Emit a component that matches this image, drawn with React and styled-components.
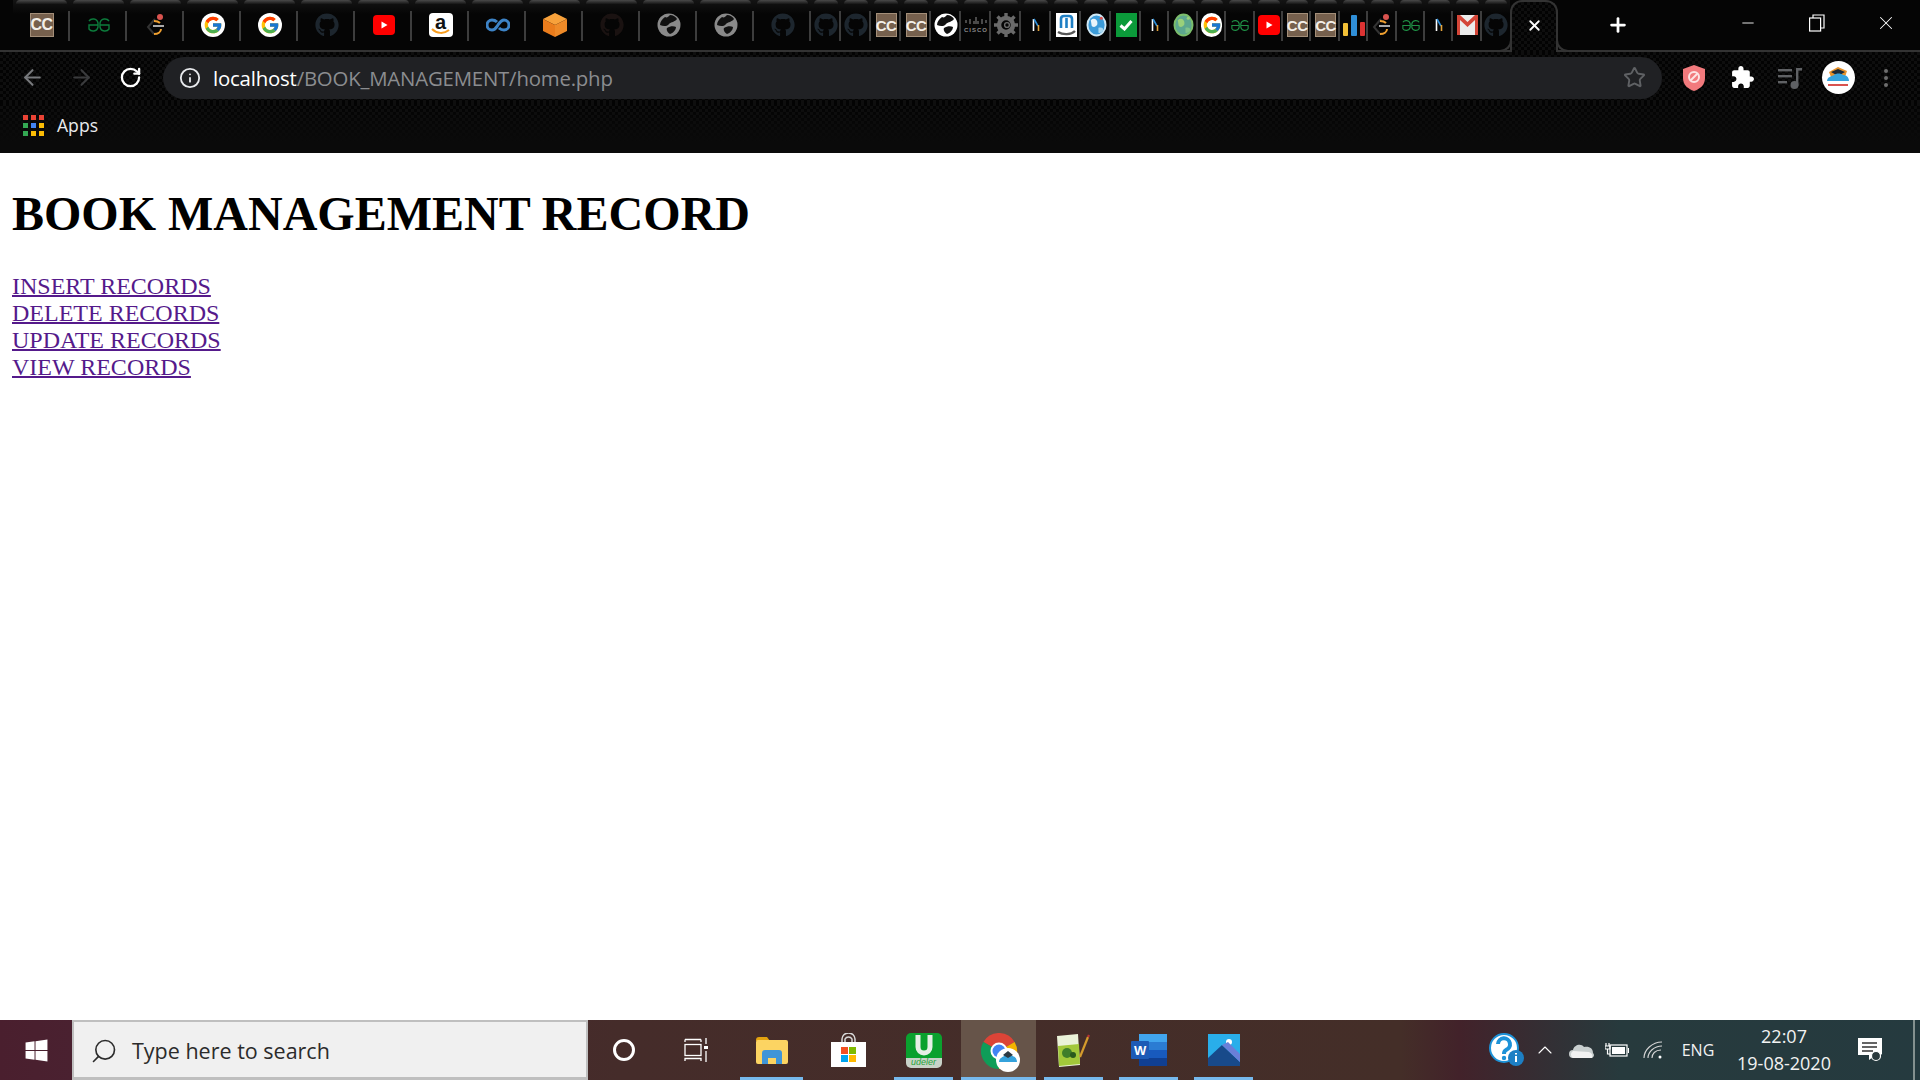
import React from 'react';
import styled, { createGlobalStyle } from 'styled-components';
import { ArrowLeft, ArrowRight, RotateCw, Star, Plus, X, Info, Minus, Search, ChevronUp } from 'lucide-react';
import { FaGithub, FaWindows } from 'react-icons/fa';
import { FcGoogle } from 'react-icons/fc';

const GlobalStyle = createGlobalStyle`
  html, body { margin: 0; padding: 0; background: #fff; }
  * { box-sizing: border-box; }
`;

const carbon = `repeating-conic-gradient(#0e0e0e 0 25%, #030303 0 50%) 0 0 / 6px 6px`;

const Screen = styled.div`
  width: 1920px;
  height: 1080px;
  display: flex;
  flex-direction: column;
  overflow: hidden;
`;

/* ---------- tab strip ---------- */
const TabStrip = styled.div`
  height: 52px;
  display: flex;
  padding-left: 13px;
  background: #050505;
  border-bottom: 2px solid #333;
  flex-shrink: 0;
`;

const Tab = styled.div`
  position: relative;
  width: ${(p) => p.$w}px;
  height: 50px;
  display: flex;
  align-items: center;
  justify-content: center;
  background: linear-gradient(#141414, #050505 14px);
  flex-shrink: 0;
  &::before {
    content: '';
    position: absolute;
    top: 0;
    left: 3px;
    right: 3px;
    height: 4px;
    border-radius: 6px 6px 0 0;
    background: linear-gradient(#4a4a4a, #161616);
  }
  &::after {
    content: '';
    position: absolute;
    top: 11px;
    right: 0;
    width: 2px;
    height: 30px;
    background: ${(p) => (p.$last ? 'transparent' : '#3d3d3d')};
  }
`;

const ActiveTab = styled.div`
  position: relative;
  width: 48px;
  height: 52px;
  display: flex;
  align-items: center;
  justify-content: center;
  padding-bottom: 3px;
  color: #fff;
  background: ${carbon};
  border: 2px solid #333;
  border-bottom: none;
  border-radius: 12px 12px 0 0;
  flex-shrink: 0;
  &::before,
  &::after {
    content: '';
    position: absolute;
    bottom: 0;
    width: 12px;
    height: 12px;
    background: #050505;
    border-bottom: 2px solid #333;
  }
  &::before {
    left: -14px;
    border-right: 2px solid #333;
    border-bottom-right-radius: 12px;
  }
  &::after {
    right: -14px;
    border-left: 2px solid #333;
    border-bottom-left-radius: 12px;
  }
`;

const NewTab = styled.div`
  width: 120px;
  height: 50px;
  display: flex;
  align-items: center;
  justify-content: center;
  color: #fff;
  flex-shrink: 0;
`;

const WindowControls = styled.div`
  margin-left: auto;
  display: flex;
  color: #fff;
`;

const WindowBtn = styled.div`
  width: 69px;
  height: 50px;
  display: flex;
  align-items: center;
  justify-content: center;
  padding-bottom: 4px;
`;

const RestoreIcon = () => (
  <svg width="16" height="18" viewBox="0 0 16 18" fill="none" stroke="#fff" strokeWidth="1.2">
    <rect x="0.6" y="4" width="11" height="13" />
    <path d="M4 4V1h11v13h-3" />
  </svg>
);

/* ---------- favicons ---------- */
const Fav = styled.div`
  position: relative;
  width: ${(p) => p.$w || 24}px;
  height: 24px;
  display: flex;
  align-items: center;
  justify-content: center;
  flex-shrink: 0;
  border-radius: ${(p) => p.$radius || 0}px;
  background: ${(p) => p.$bg || 'transparent'};
`;

const CcBox = styled(Fav)`
  background: #76604d;
  border: 1px solid #a38e78;
  color: #f3efe9;
  font: 700 ${(p) => (p.$w < 24 ? 15 : 16)}px/1 'Liberation Sans', sans-serif;
  letter-spacing: -0.5px;
`;

const AmazonTile = styled(Fav)`
  align-items: flex-start;
`;

const AmazonLetter = styled.span`
  font: 700 20px/18px 'Liberation Sans', sans-serif;
  color: #111;
`;

const AmazonSmile = styled.svg`
  position: absolute;
  left: 2px;
  bottom: 1px;
`;

const CiscoWord = styled.span`
  font: 700 6px/1 'Liberation Sans', sans-serif;
  letter-spacing: 1px;
  color: #8a8a8a;
`;

const CiscoBox = styled.div`
  display: flex;
  flex-direction: column;
  align-items: center;
  gap: 2px;
`;

const Gfg = ({ narrow }) => (
  <svg width={narrow ? 20 : 24} height={narrow ? 13 : 16} viewBox="0 0 24 16" fill="none" stroke={narrow ? '#1f8f45' : '#0c7c3c'} strokeWidth="1.4">
    <path d="M2 4C4 1 10 1 11 6v4C10 15 4 15 2 12V8h9" />
    <path d="M22 4C20 1 14 1 13 6v4c1 5 7 5 9 2V8h-9" />
  </svg>
);

const Ninja = () => (
  <svg width="24" height="24" viewBox="0 0 24 24" fill="none">
    <path d="M11 6 4 14l6 7" stroke="#333" strokeWidth="2" />
    <circle cx="16" cy="4" r="3" fill="#d9534f" />
    <path d="M10 8c3 0 4 0 6 2" stroke="#f0a030" strokeWidth="2" />
    <path d="M9 13h11" stroke="#aaa" strokeWidth="2" />
    <path d="M17 16c0 3-3 5-7 5" stroke="#f0a030" strokeWidth="2" />
  </svg>
);

const Youtube = () => (
  <svg width="22" height="20" viewBox="0 0 22 20">
    <rect width="22" height="20" rx="4" fill="#f00" />
    <path d="M8.5 6.5v7l6-3.5z" fill="#fff" />
  </svg>
);

const AmazonIcon = () => (
  <AmazonTile $bg="#fff" $radius={4}>
    <AmazonLetter>a</AmazonLetter>
    <AmazonSmile width="20" height="8" viewBox="0 0 20 8" fill="none">
      <path d="M1 1c5 5 12 5 17 1" stroke="#f79c1d" strokeWidth="2" />
    </AmazonSmile>
  </AmazonTile>
);

const Loop = () => (
  <svg width="24" height="14" viewBox="0 0 24 14" fill="none" stroke="#3d83c6" strokeWidth="3">
    <path d="M11 4C9 2 7 2 6 2a5 5 0 0 0 0 10c3 0 4-2 6-5s3-5 6-5a5 5 0 0 1 0 10c-1 0-3 0-5-2" />
  </svg>
);

const Cube = () => (
  <svg width="24" height="24" viewBox="0 0 24 24">
    <path d="M12 0 24 6 12 12 0 6z" fill="#f7a13b" />
    <path d="M0 6l12 6v12L0 18z" fill="#ea7c1c" />
    <path d="M24 6 12 12v12l12-6z" fill="#ee8a28" />
  </svg>
);

const Globe = ({ color, size = 24 }) => (
  <svg width={size} height={size} viewBox="0 0 24 24">
    <circle cx="12" cy="12" r="11.5" fill={color} />
    <path d="M13 2c3 0 6 2 7 4-2 3-6 3-8 5-1 2-5 3-9 1 0-3 2-6 5-8 2 1 3 0 5-2z" fill="#111" />
    <path d="M10 15c3-2 7-2 9-1 0 3-3 6-6 7-2-1-4-4-3-6z" fill="#111" />
  </svg>
);

const Cisco = () => (
  <CiscoBox>
    <svg width="22" height="8" viewBox="0 0 22 8" stroke="#777" strokeWidth="1.2">
      <path d="M1 3v3M5 2v5M9 4v3M13 4v3M17 2v5M21 3v3M11 0v7" />
    </svg>
    <CiscoWord>CISCO</CiscoWord>
  </CiscoBox>
);

const Gear = () => (
  <svg width="24" height="24" viewBox="0 0 24 24">
    <circle cx="12" cy="12" r="7" fill="none" stroke="#6a6a6a" strokeWidth="4.5" />
    <path d="M12 0v5M12 19v5M0 12h5M19 12h5M3.5 3.5l3.5 3.5M17 17l3.5 3.5M20.5 3.5 17 7M7 17l-3.5 3.5" stroke="#6a6a6a" strokeWidth="3.4" />
    <circle cx="13" cy="12" r="2.4" fill="none" stroke="#6a6a6a" strokeWidth="1.4" />
  </svg>
);

const Sliver = () => (
  <svg width="8" height="14" viewBox="0 0 8 14" fill="none" strokeWidth="1.6">
    <path d="M1.5 1v12" stroke="#fff" />
    <path d="M2 1l4 7" stroke="#2f8fd8" />
    <path d="M6.5 7v6" stroke="#e2a23b" />
  </svg>
);

const WTile = () => (
  <Fav $w={21} $bg="#fff">
    <svg width="21" height="24" viewBox="0 0 21 24" fill="none">
      <path d="M5 15V6q0-3 3-3h5q3 0 3 3v9M10.5 5v10" stroke="#1f7fc4" strokeWidth="2.6" />
      <path d="M2 19c5 3 13 3 17-1" stroke="#555" strokeWidth="2.4" />
    </svg>
  </Fav>
);

const ShinyGlobe = ({ green }) => (
  <svg width="21" height="24" viewBox="0 0 22 24">
    <ellipse cx="11" cy="12" rx="10.5" ry="12" fill={green ? '#7cbe6b' : '#cfe8f5'} />
    <ellipse cx="11" cy="12" rx="8.5" ry="10" fill={green ? '#5da78f' : '#3b9bd9'} />
    <path d="M5 7c3-3 7-1 7 3s-4 5-6 3z" fill={green ? '#9ad07a' : '#e8f4fa'} />
    <path d="M13 15c3-1 5 0 5 2s-3 4-5 3z" fill={green ? '#7fc28a' : '#a8d8f0'} />
    <circle cx="16" cy="5" r="1.6" fill={green ? '#9ad07a' : '#d9534f'} />
  </svg>
);

const CheckTile = () => (
  <Fav $w={21} $bg="#0b9a3a">
    <svg width="14" height="12" viewBox="0 0 14 12" fill="none">
      <path d="M1.5 6.5 5.5 10l7-8" stroke="#fff" strokeWidth="3" />
    </svg>
  </Fav>
);

const Bars = () => (
  <svg width="22" height="24" viewBox="0 0 22 24">
    <rect x="0" y="10" width="5" height="13" rx="1" fill="#f2c037" />
    <rect x="8" y="2" width="6" height="21" rx="1" fill="#2f8fd8" />
    <rect x="17" y="9" width="5" height="14" rx="1" fill="#d33" />
  </svg>
);

const Gmail = () => (
  <svg width="21" height="20" viewBox="0 0 21 20">
    <rect width="21" height="20" fill="#ececec" />
    <path d="M0 0h3l7.5 7L18 0h3v20h-3V5l-7.5 7L3 5v15H0z" fill="#d44638" />
  </svg>
);

const Favicon = ({ kind, narrow }) => {
  const w = narrow ? 21 : 24;
  switch (kind) {
    case 'cc':
      return <CcBox $w={w}>CC</CcBox>;
    case 'gfg':
      return <Gfg narrow={narrow} />;
    case 'ninja':
      return <Ninja />;
    case 'google':
      return (
        <Fav $w={w} $bg="#fff" $radius={12}>
          <FcGoogle size={20} />
        </Fav>
      );
    case 'github':
      return <FaGithub size={24} color="#1d262e" />;
    case 'githubDim':
      return <FaGithub size={24} color="#1a1211" />;
    case 'yt':
      return <Youtube />;
    case 'amazon':
      return <AmazonIcon />;
    case 'loop':
      return <Loop />;
    case 'cube':
      return <Cube />;
    case 'globe':
      return <Globe color="#8a8a8a" />;
    case 'globeWhite':
      return <Globe color="#fff" />;
    case 'cisco':
      return <Cisco />;
    case 'gear':
      return <Gear />;
    case 'sliver':
      return <Sliver />;
    case 'w':
      return <WTile />;
    case 'earth':
      return <ShinyGlobe />;
    case 'earthGreen':
      return <ShinyGlobe green />;
    case 'check':
      return <CheckTile />;
    case 'bars':
      return <Bars />;
    case 'gmail':
      return <Gmail />;
    default:
      return null;
  }
};

const wideTabs = ['cc', 'gfg', 'ninja', 'google', 'google', 'github', 'yt', 'amazon', 'loop', 'cube', 'githubDim', 'globe', 'globe', 'github'];
const narrowTabs = ['github', 'github', 'cc', 'cc', 'globeWhite', 'cisco', 'gear', 'sliver', 'w', 'earth', 'check', 'sliver', 'earthGreen', 'google', 'gfg', 'yt', 'cc', 'cc', 'bars', 'ninja', 'gfg', 'sliver', 'gmail', 'github'];

/* ---------- toolbar ---------- */
const Toolbar = styled.div`
  height: 51px;
  display: flex;
  align-items: center;
  padding-left: 8px;
  background: ${carbon};
  flex-shrink: 0;
`;

const NavBtn = styled.div`
  width: 49px;
  display: flex;
  align-items: center;
  justify-content: center;
  color: ${(p) => p.$color};
  flex-shrink: 0;
`;

const Omnibox = styled.div`
  width: 1499px;
  height: 42px;
  margin-left: 8px;
  border-radius: 21px;
  background: #202124;
  display: flex;
  align-items: center;
  padding: 0 16px;
  flex-shrink: 0;
  font: 400 20.4px 'Open Sans', sans-serif;
  letter-spacing: -0.2px;
`;

const UrlHost = styled.span`
  color: #fff;
  margin-left: 12px;
`;

const UrlPath = styled.span`
  color: #8b8d90;
`;

const StarWrap = styled.div`
  margin-left: auto;
  display: flex;
  color: #5f6164;
`;

const ExtensionRow = styled.div`
  display: flex;
  align-items: center;
  margin-left: 8px;
`;

const ExtBtn = styled.div`
  width: 48px;
  display: flex;
  align-items: center;
  justify-content: center;
`;

const Avatar = styled.div`
  width: 33px;
  height: 33px;
  border-radius: 50%;
  background: #fff;
  display: flex;
  align-items: center;
  justify-content: center;
`;

const Dots = styled.div`
  display: flex;
  flex-direction: column;
  gap: 3px;
`;

const Dot = styled.span`
  width: 4px;
  height: 4px;
  border-radius: 50%;
  background: #6e6e6e;
`;

const Shield = () => (
  <svg width="24" height="28" viewBox="0 0 24 28">
    <path d="M12 1l11 4v9c0 7-5 11-11 13C6 25 1 21 1 14V5z" fill="#f27a7d" />
    <circle cx="12" cy="13" r="5" fill="none" stroke="#fde3e3" strokeWidth="2" />
    <path d="M8.5 16.5l7-7" stroke="#fde3e3" strokeWidth="2" />
  </svg>
);

const Puzzle = () => (
  <svg width="25" height="25" viewBox="0 0 24 24" fill="#fff">
    <path d="M20.5 11H19V7c0-1.1-.9-2-2-2h-4V3.5C13 2.12 11.88 1 10.5 1S8 2.12 8 3.5V5H4c-1.1 0-1.99.9-1.99 2v3.8H3.5c1.49 0 2.7 1.21 2.7 2.7s-1.21 2.7-2.7 2.7H2V20c0 1.1.9 2 2 2h3.8v-1.5c0-1.49 1.21-2.7 2.7-2.7 1.49 0 2.7 1.21 2.7 2.7V22H17c1.1 0 2-.9 2-2v-4h1.5c1.38 0 2.5-1.12 2.5-2.5S21.88 11 20.5 11z" />
  </svg>
);

const QueueIcon = () => (
  <svg width="24" height="24" viewBox="0 0 24 24" fill="#5f6164">
    <rect x="0" y="3" width="14" height="2.4" />
    <rect x="0" y="9" width="14" height="2.4" />
    <rect x="0" y="15" width="9" height="2.4" />
    <rect x="18" y="2" width="6" height="2.6" />
    <rect x="18" y="2" width="2.4" height="18" />
    <circle cx="16.5" cy="19" r="4" />
  </svg>
);

const AvatarArt = () => (
  <svg width="28" height="28" viewBox="0 0 28 28">
    <path d="M5 8l9-5 9 4-2 6H7z" fill="#e8932b" />
    <path d="M7 8l7-3 7 3-7 4z" fill="#1e2a36" />
    <path d="M3 17c0-4 5-5 7-6 2-2 7-2 9 0 3 0 6 2 6 6z" fill="#35a2dc" />
    <rect x="4" y="20" width="20" height="2" fill="#d9534f" />
  </svg>
);

/* ---------- bookmarks ---------- */
const BookmarksBar = styled.div`
  height: 50px;
  display: flex;
  align-items: center;
  padding: 0 0 6px 23px;
  gap: 13px;
  background: linear-gradient(rgba(10, 10, 10, 0), #0a0a0a 38px), ${carbon};
  color: #e8eaed;
  font: 400 17.6px 'Open Sans', sans-serif;
  flex-shrink: 0;
`;

const AppsGrid = styled.div`
  display: grid;
  grid-template-columns: repeat(3, 5px);
  grid-auto-rows: 5px;
  gap: 3px;
`;

const AppsDot = styled.span`
  background: ${(p) => p.$c};
`;

const appsColors = ['#ea4335', '#ea4335', '#ea4335', '#34a853', '#4285f4', '#fbbc05', '#34a853', '#fbbc05', '#fbbc05'];

/* ---------- page ---------- */
const Page = styled.main`
  flex: 1;
  background: #fff;
  padding: 33px 12px 0;
  font-family: 'Liberation Serif', 'Times New Roman', serif;
  color: #000;
`;

const Heading = styled.h1`
  margin: 0 0 32px;
  font-size: 48px;
  font-weight: 700;
  line-height: 55px;
`;

const RecordLink = styled.a`
  display: table;
  font-size: 24px;
  line-height: 27px;
  color: #551a8b;
  text-decoration: underline;
  text-decoration-thickness: 2px;
`;

/* ---------- taskbar ---------- */
const Taskbar = styled.div`
  height: 60px;
  display: flex;
  align-items: stretch;
  background: linear-gradient(90deg, #4a1f2e 0, #4a2130 72px, #452c2a 620px, #442e28 1400px, #42222a 1460px, #273a3d 1620px, #253a3f 1920px);
  flex-shrink: 0;
`;

const StartBtn = styled.div`
  width: 72px;
  display: flex;
  align-items: center;
  justify-content: center;
  color: #fff;
  flex-shrink: 0;
`;

const SearchBox = styled.div`
  width: 516px;
  display: flex;
  align-items: center;
  gap: 14px;
  padding: 2px 0 0 16px;
  background: #f0f0f0;
  border: 2px solid #bfbfbf;
  border-bottom-width: 3px;
  color: #2b2b2b;
  font: 400 21.5px 'Open Sans', sans-serif;
  flex-shrink: 0;
`;

const MirroredSearch = styled(Search)`
  transform: scaleX(-1);
`;

const TaskBtn = styled.div`
  width: ${(p) => p.$w || 75}px;
  display: flex;
  align-items: center;
  justify-content: center;
  color: #fff;
  position: relative;
  background: ${(p) => (p.$active ? '#665449' : 'transparent')};
  flex-shrink: 0;
  &::after {
    content: '';
    display: ${(p) => (p.$open ? 'block' : 'none')};
    position: absolute;
    bottom: 0;
    left: ${(p) => (p.$active ? 0 : 8)}px;
    right: ${(p) => (p.$active ? 0 : 8)}px;
    height: 3px;
    background: #76b9ed;
  }
`;

const Tray = styled.div`
  margin-left: auto;
  display: flex;
  align-items: center;
  color: #fff;
`;

const TraySlot = styled.div`
  width: ${(p) => p.$w}px;
  display: flex;
  align-items: center;
  justify-content: center;
  flex-shrink: 0;
`;

const TrayText = styled.span`
  font: 400 16px 'Open Sans', sans-serif;
  color: #f2f2f2;
`;

const Clock = styled.div`
  width: 118px;
  display: flex;
  flex-direction: column;
  align-items: center;
  gap: 4px;
  font: 400 18px/23px 'Open Sans', sans-serif;
  color: #f2f2f2;
`;

const ShowDesktop = styled.div`
  width: 2px;
  height: 60px;
  margin: 0 5px 0 16px;
  background: #84908f;
`;

const TaskView = () => (
  <svg width="24" height="24" viewBox="0 0 24 24" fill="none" stroke="#fff" strokeWidth="1.3">
    <path d="M1 4V1.5M1 1.5h16M17 1.5V4" />
    <rect x="1" y="6.5" width="16" height="11" />
    <path d="M1 23v-2.5h16V23M22 0v6M22 13v11" />
    <rect x="20" y="8" width="4" height="3" fill="#fff" stroke="none" />
  </svg>
);

const Explorer = () => (
  <svg width="32" height="27" viewBox="0 0 32 27">
    <path d="M0 3q0-3 3-3h8l3 4H0z" fill="#e2a20f" />
    <rect x="0" y="3" width="32" height="24" rx="2" fill="#fcd462" />
    <path d="M6 27V16q0-3 3-3h14q3 0 3 3v11h-6v-6h-8v6z" fill="#3f95d8" />
  </svg>
);

const Store = () => (
  <svg width="35" height="34" viewBox="0 0 35 34">
    <path d="M11 10V6a6.5 6 0 0 1 13 0v4M14 10V6a4 4 0 0 1 7 0v4" fill="none" stroke="#d8d8d8" strokeWidth="1.5" />
    <rect y="9" width="35" height="25" fill="#fff" />
    <rect x="10" y="14" width="7" height="7" fill="#f25022" />
    <rect x="18" y="14" width="7" height="7" fill="#7fba00" />
    <rect x="10" y="22" width="7" height="7" fill="#00a4ef" />
    <rect x="18" y="22" width="7" height="7" fill="#ffb900" />
  </svg>
);

const UdelerWord = styled.span`
  font: italic 400 9px/1 'Liberation Sans', sans-serif;
  color: #27a33a;
`;

const UdelerTile = styled.div`
  width: 36px;
  height: 35px;
  border-radius: 5px;
  background: linear-gradient(#0aa12e 0 25px, #c8d2c8 25px);
  display: flex;
  flex-direction: column;
  align-items: center;
  justify-content: space-between;
  padding: 2px 0 1px;
`;

const Udeler = () => (
  <UdelerTile>
    <svg width="18" height="21" viewBox="0 0 18 21" fill="none">
      <path d="M3 0v12a6 6 0 0 0 12 0V0" stroke="#e6efe6" strokeWidth="5" />
    </svg>
    <UdelerWord>udeler</UdelerWord>
  </UdelerTile>
);

const ChromeWrap = styled.div`
  display: flex;
  margin: 5px 0 0 5px;
`;

const ChromeBadge = () => (
  <ChromeWrap>
    <svg width="40" height="40" viewBox="0 0 40 40">
      <path d="M18 18 2.4 9A18 18 0 0 1 33.6 9z" fill="#db4437" />
      <path d="M18 18 33.6 9A18 18 0 0 1 18 36z" fill="#f4b400" />
      <path d="M18 18V36A18 18 0 0 1 2.4 9z" fill="#0f9d58" />
      <circle cx="18" cy="18" r="8.5" fill="#fff" />
      <circle cx="18" cy="18" r="6.5" fill="#4285f4" />
      <circle cx="27" cy="27" r="12" fill="#fff" />
      <path d="M18 29c0-4 4-5 5-6 2-3 6-3 8 0 2 0 5 2 5 6z" fill="#35a2dc" />
      <path d="M22 22l5-4 5 4-5 3z" fill="#2b3a44" />
    </svg>
  </ChromeWrap>
);

const NotepadPP = () => (
  <svg width="33" height="33" viewBox="0 0 33 33">
    <path d="M0 2l21-2 2 31-21 2z" fill="#eaf2d8" />
    <path d="M1 12l21-2 1 20-21 2z" fill="#a2c83a" />
    <circle cx="10" cy="19" r="5" fill="#3e7d2a" />
    <circle cx="16" cy="21" r="3" fill="#2a5a1d" />
    <path d="M23 23 31 3" stroke="#d59b2c" strokeWidth="2.2" />
    <path d="M31 3l1-2" stroke="#b33" strokeWidth="2.2" />
  </svg>
);

const WordLetter = styled.text`
  font: 700 13px 'Liberation Sans', sans-serif;
  fill: #fff;
`;

const Word = () => (
  <svg width="36" height="32" viewBox="0 0 36 32">
    <rect x="8" y="0" width="28" height="8" fill="#41a5ee" />
    <rect x="8" y="8" width="28" height="8" fill="#2b7cd3" />
    <rect x="8" y="16" width="28" height="8" fill="#185abd" />
    <rect x="8" y="24" width="28" height="8" fill="#103f91" />
    <rect x="0" y="7" width="18" height="18" rx="1" fill="#1d5bb6" />
    <WordLetter x="3" y="21">W</WordLetter>
  </svg>
);

const Photos = () => (
  <svg width="32" height="32" viewBox="0 0 32 32">
    <rect width="32" height="32" fill="#29aeea" />
    <circle cx="21" cy="8" r="3" fill="#fff" />
    <path d="M0 24 14 11l18 17v4H0z" fill="#184a8a" />
    <path d="M14 11l6-3 12 12v8z" fill="#6a7fd8" />
  </svg>
);

const HelpBadge = () => (
  <svg width="36" height="34" viewBox="0 0 36 34">
    <circle cx="15" cy="15" r="14" fill="#fff" stroke="#1d92d8" strokeWidth="2" />
    <path d="M9 11a6 6 0 1 1 8 6q-2 1-2 4" fill="none" stroke="#1d92d8" strokeWidth="4" />
    <circle cx="15" cy="25" r="2.2" fill="#1d92d8" />
    <circle cx="27" cy="25" r="8" fill="#1d7fc4" />
    <path d="M27 23v6M27 20v1.5" stroke="#fff" strokeWidth="2" />
  </svg>
);

const Cloud = () => (
  <svg width="25" height="16" viewBox="0 0 25 16">
    <path d="M4 16a4 4 0 0 1 0-8c1-5 8-7 11-3 5-1 9 1 9 6a3 3 0 0 1-1 5z" fill="#c9cfcf" />
    <path d="M4 16a4 4 0 0 1 0-7l16 1c3 1 4 3 3 6z" fill="#f2f2f2" />
  </svg>
);

const Battery = () => (
  <svg width="24" height="16" viewBox="0 0 24 16" fill="none" stroke="#fff" strokeWidth="1.2">
    <path d="M1 1v3M4 1v3M0 4h5v3H0zM2.5 7v5h3" />
    <rect x="5" y="3" width="17" height="11" />
    <rect x="7" y="5" width="13" height="7" fill="#fff" stroke="none" />
    <path d="M23.5 6v5" />
  </svg>
);

const Wifi = () => (
  <svg width="20" height="18" viewBox="0 0 20 18" fill="none" stroke="#d8d8d8" strokeWidth="1.1">
    <path d="M1 17C1 9 9 1 19 1M5 17c0-6 6-12 14-12M9 17c0-4 3-8 9-8" />
    <circle cx="17" cy="16" r="1.5" fill="#fff" stroke="none" />
  </svg>
);

const Notification = () => (
  <svg width="24" height="24" viewBox="0 0 24 24">
    <path d="M0 0h24v16l-5 4-4-1-4 3v-5H0z" fill="#fff" />
    <path d="M4 5h15M4 9h15M4 13h11" stroke="#333" strokeWidth="1.3" />
    <circle cx="18" cy="18" r="4.5" fill="#2a3a3d" stroke="#fff" strokeWidth="1.2" />
  </svg>
);

const App = () => (
  <Screen>
    <GlobalStyle />
    <TabStrip>
      {wideTabs.map((kind, i) => (
        <Tab key={`w${i}`} $w={57}>
          <Favicon kind={kind} />
        </Tab>
      ))}
      {narrowTabs.map((kind, i) => (
        <Tab key={`n${i}`} $w={i < 11 ? 30 : 28.4} $last={i === narrowTabs.length - 1}>
          <Favicon kind={kind} narrow />
        </Tab>
      ))}
      <ActiveTab>
        <X size={17} strokeWidth={2.6} />
      </ActiveTab>
      <NewTab>
        <Plus size={22} strokeWidth={3} />
      </NewTab>
      <WindowControls>
        <WindowBtn>
          <Minus size={18} strokeWidth={1.2} />
        </WindowBtn>
        <WindowBtn>
          <RestoreIcon />
        </WindowBtn>
        <WindowBtn>
          <X size={22} strokeWidth={1.1} />
        </WindowBtn>
      </WindowControls>
    </TabStrip>

    <Toolbar>
      <NavBtn $color="#77797c">
        <ArrowLeft size={25} strokeWidth={2} />
      </NavBtn>
      <NavBtn $color="#3a3b3d">
        <ArrowRight size={25} strokeWidth={2} />
      </NavBtn>
      <NavBtn $color="#fff">
        <RotateCw size={23} strokeWidth={2.4} />
      </NavBtn>
      <Omnibox>
        <Info size={22} color="#e8eaed" strokeWidth={2} />
        <UrlHost>localhost</UrlHost>
        <UrlPath>/BOOK_MANAGEMENT/home.php</UrlPath>
        <StarWrap>
          <Star size={23} strokeWidth={2} />
        </StarWrap>
      </Omnibox>
      <ExtensionRow>
        <ExtBtn>
          <Shield />
        </ExtBtn>
        <ExtBtn>
          <Puzzle />
        </ExtBtn>
        <ExtBtn>
          <QueueIcon />
        </ExtBtn>
        <ExtBtn>
          <Avatar>
            <AvatarArt />
          </Avatar>
        </ExtBtn>
        <ExtBtn>
          <Dots>
            <Dot />
            <Dot />
            <Dot />
          </Dots>
        </ExtBtn>
      </ExtensionRow>
    </Toolbar>

    <BookmarksBar>
      <AppsGrid>
        {appsColors.map((c, i) => (
          <AppsDot key={i} $c={c} />
        ))}
      </AppsGrid>
      Apps
    </BookmarksBar>

    <Page>
      <Heading>BOOK MANAGEMENT RECORD</Heading>
      <RecordLink href="#insert">INSERT RECORDS</RecordLink>
      <RecordLink href="#delete">DELETE RECORDS</RecordLink>
      <RecordLink href="#update">UPDATE RECORDS</RecordLink>
      <RecordLink href="#view">VIEW RECORDS</RecordLink>
    </Page>

    <Taskbar>
      <StartBtn>
        <FaWindows size={25} />
      </StartBtn>
      <SearchBox>
        <MirroredSearch size={28} strokeWidth={1.4} />
        Type here to search
      </SearchBox>
      <TaskBtn $w={72}>
        <svg width="24" height="24" viewBox="0 0 24 24" fill="none" stroke="#fff" strokeWidth="3">
          <circle cx="12" cy="12" r="9.5" />
        </svg>
      </TaskBtn>
      <TaskBtn $w={72}>
        <TaskView />
      </TaskBtn>
      <TaskBtn $w={79} $open>
        <Explorer />
      </TaskBtn>
      <TaskBtn>
        <Store />
      </TaskBtn>
      <TaskBtn $open>
        <Udeler />
      </TaskBtn>
      <TaskBtn $active $open>
        <ChromeBadge />
      </TaskBtn>
      <TaskBtn $open>
        <NotepadPP />
      </TaskBtn>
      <TaskBtn $open>
        <Word />
      </TaskBtn>
      <TaskBtn $open>
        <Photos />
      </TaskBtn>
      <Tray>
        <TraySlot $w={40}>
          <HelpBadge />
        </TraySlot>
        <TraySlot $w={36}>
          <ChevronUp size={24} strokeWidth={1.1} />
        </TraySlot>
        <TraySlot $w={36}>
          <Cloud />
        </TraySlot>
        <TraySlot $w={36}>
          <Battery />
        </TraySlot>
        <TraySlot $w={36}>
          <Wifi />
        </TraySlot>
        <TraySlot $w={54}>
          <TrayText>ENG</TrayText>
        </TraySlot>
        <Clock>
          <span>22:07</span>
          <span>19-08-2020</span>
        </Clock>
        <TraySlot $w={54}>
          <Notification />
        </TraySlot>
        <ShowDesktop />
      </Tray>
    </Taskbar>
  </Screen>
);

export default App;
